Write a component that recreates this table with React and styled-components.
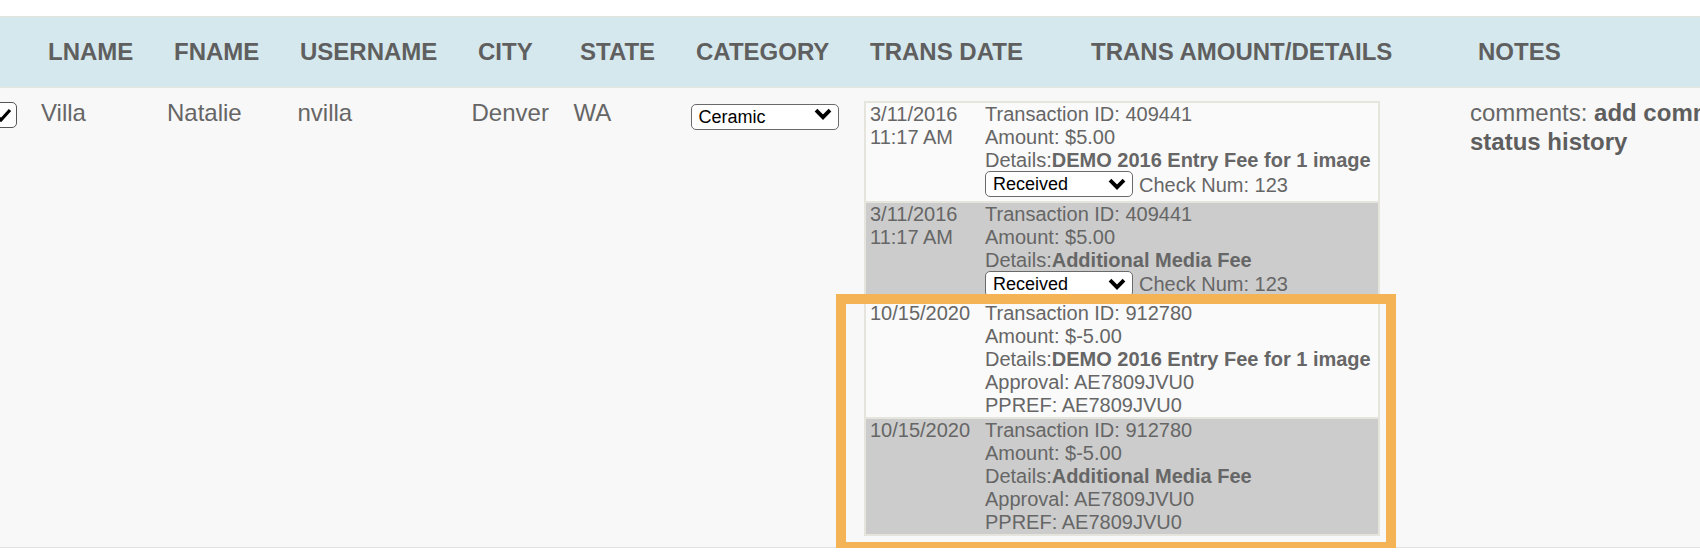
import React from 'react';
import styled, { createGlobalStyle } from 'styled-components';

const GlobalStyle = createGlobalStyle`
  html, body {
    margin: 0;
    padding: 0;
    background: #fff;
    overflow: hidden;
  }
  body {
    font-family: "Liberation Sans", Arial, sans-serif;
  }
`;

const Page = styled.div`
  padding-top: 16px;
  width: 1900px;
`;

const HeadRow = styled.div`
  display: flex;
  align-items: center;
  height: 70px;
  background: #d5e8ee;
  border-top: 1px solid #e3e3da;
  border-bottom: 1px solid #e6e6de;
`;

const HeadCell = styled.div`
  flex: 0 0 ${({ $w }) => $w}px;
  font-size: 24px;
  font-weight: bold;
  color: #5f5f5f;
  white-space: nowrap;
`;

const BodyRow = styled.div`
  display: flex;
  align-items: flex-start;
  background: #f8f8f8;
  padding: 11px 0 11px;
  border-bottom: 1px solid #e2e2e2;
`;

const Cell = styled.div`
  flex: 0 0 ${({ $w }) => $w}px;
  font-size: 24px;
  color: #666;
  white-space: nowrap;
`;

const Checkbox = styled.div`
  width: 26px;
  height: 26px;
  box-sizing: border-box;
  margin: 3px 0 0 -9px;
  border: 1.5px solid #555;
  border-radius: 5px;
  background: #fff;
  display: flex;
  align-items: center;
  justify-content: center;
`;

const SelectWrap = styled.div`
  position: relative;
  width: 148px;
  height: 26px;
  margin-top: ${({ $top }) => $top || 0}px;
  flex-shrink: 0;
`;

const Select = styled.select`
  appearance: none;
  -webkit-appearance: none;
  width: 100%;
  height: 100%;
  box-sizing: border-box;
  border: 1.5px solid #6a6a6a;
  border-radius: 5px;
  background: #fff;
  padding: 0 0 0 7px;
  margin: 0;
  font-family: "Liberation Sans", Arial, sans-serif;
  font-size: 18px;
  color: #000;
  outline: none;
`;

const Chevron = styled.svg`
  position: absolute;
  right: 7px;
  top: 7px;
  pointer-events: none;
`;

const TxBox = styled.div`
  width: 516px;
  box-sizing: border-box;
  margin-top: 2px;
  padding: 2px;
  background: #e5e5dd;
  display: flex;
  flex-direction: column;
  gap: 2px;
  font-size: 20px;
  color: #666;
`;

const TxGroup = styled.div`
  position: relative;
  display: flex;
  flex-direction: column;
  gap: 2px;
`;

const TxRow = styled.div`
  display: flex;
  background: ${({ $shade }) => ($shade ? '#cccccc' : '#fafafa')};
`;

const TxDate = styled.div`
  flex: 0 0 119px;
  box-sizing: border-box;
  padding-left: 4px;
`;

const TxDetails = styled.div`
  flex: 1;
  white-space: nowrap;
`;

const Line = styled.div`
  line-height: 23px;
`;

const SelectLine = styled.div`
  display: flex;
  align-items: flex-start;
  height: 28.5px;
  gap: 6px;
  line-height: 23px;

  span {
    margin-top: 1.5px;
  }
`;

const Highlight = styled.div`
  position: absolute;
  top: -8px;
  left: -30px;
  right: -18px;
  bottom: -18px;
  border: 10px solid #f4b455;
  pointer-events: none;
`;

const Notes = styled.div`
  line-height: 29px;
  margin-top: -1px;
  b {
    color: #5e5e5e;
  }
`;

const headCols = [
  { w: 48 },
  { w: 126, t: 'LNAME' },
  { w: 126, t: 'FNAME' },
  { w: 178, t: 'USERNAME' },
  { w: 102, t: 'CITY' },
  { w: 116, t: 'STATE' },
  { w: 174, t: 'CATEGORY' },
  { w: 221, t: 'TRANS DATE' },
  { w: 387, t: 'TRANS AMOUNT/DETAILS' },
  { w: 400, t: 'NOTES' },
];

const transactions = [
  {
    date: ['3/11/2016', '11:17 AM'],
    id: '409441',
    amount: '$5.00',
    details: 'DEMO 2016 Entry Fee for 1 image',
    check: '123',
  },
  {
    date: ['3/11/2016', '11:17 AM'],
    id: '409441',
    amount: '$5.00',
    details: 'Additional Media Fee',
    check: '123',
    shade: true,
  },
];

const refunds = [
  {
    date: ['10/15/2020'],
    id: '912780',
    amount: '$-5.00',
    details: 'DEMO 2016 Entry Fee for 1 image',
    approval: 'AE7809JVU0',
  },
  {
    date: ['10/15/2020'],
    id: '912780',
    amount: '$-5.00',
    details: 'Additional Media Fee',
    approval: 'AE7809JVU0',
    shade: true,
  },
];

const ChevronIcon = () => (
  <Chevron width="18" height="12" viewBox="0 0 18 12">
    <path d="M2 2.2 L9 9.2 L16 2.2" fill="none" stroke="#000" strokeWidth="3.8" />
  </Chevron>
);

const Dropdown = ({ value, top }) => (
  <SelectWrap $top={top}>
    <Select defaultValue={value}>
      <option>{value}</option>
    </Select>
    <ChevronIcon />
  </SelectWrap>
);

const TxEntry = ({ tx }) => (
  <TxRow $shade={tx.shade}>
    <TxDate>
      {tx.date.map((d) => (
        <Line key={d}>{d}</Line>
      ))}
    </TxDate>
    <TxDetails>
      <Line>Transaction ID: {tx.id}</Line>
      <Line>Amount: {tx.amount}</Line>
      <Line>
        Details:<b>{tx.details}</b>
      </Line>
      {tx.check && (
        <SelectLine>
          <Dropdown value="Received" top={-1} />
          <span>Check Num: {tx.check}</span>
        </SelectLine>
      )}
      {tx.approval && (
        <>
          <Line>Approval: {tx.approval}</Line>
          <Line>PPREF: {tx.approval}</Line>
        </>
      )}
    </TxDetails>
  </TxRow>
);

export default function App() {
  return (
    <Page>
      <GlobalStyle />
      <HeadRow>
        {headCols.map((c, i) => (
          <HeadCell key={i} $w={c.w}>
            {c.t}
          </HeadCell>
        ))}
      </HeadRow>
      <BodyRow>
        <Cell $w={41}>
          <Checkbox>
            <svg width="22" height="22" viewBox="0 0 22 22">
              <path d="M3 11 L8 16 L17 6" fill="none" stroke="#000" strokeWidth="3.2" />
            </svg>
          </Checkbox>
        </Cell>
        <Cell $w={126}>Villa</Cell>
        <Cell $w={130.5}>Natalie</Cell>
        <Cell $w={174}>nvilla</Cell>
        <Cell $w={102}>Denver</Cell>
        <Cell $w={117}>WA</Cell>
        <Cell $w={173.5}>
          <Dropdown value="Ceramic" top={1.5} />
        </Cell>
        <Cell $w={606}>
          <TxBox>
            {transactions.map((tx, i) => (
              <TxEntry key={i} tx={tx} />
            ))}
            <TxGroup>
              {refunds.map((tx, i) => (
                <TxEntry key={i} tx={tx} />
              ))}
              <Highlight />
            </TxGroup>
          </TxBox>
        </Cell>
        <Cell $w={500}>
          <Notes>
            comments: <b>add comments</b>
            <br />
            <b>status history</b>
          </Notes>
        </Cell>
      </BodyRow>
    </Page>
  );
}
